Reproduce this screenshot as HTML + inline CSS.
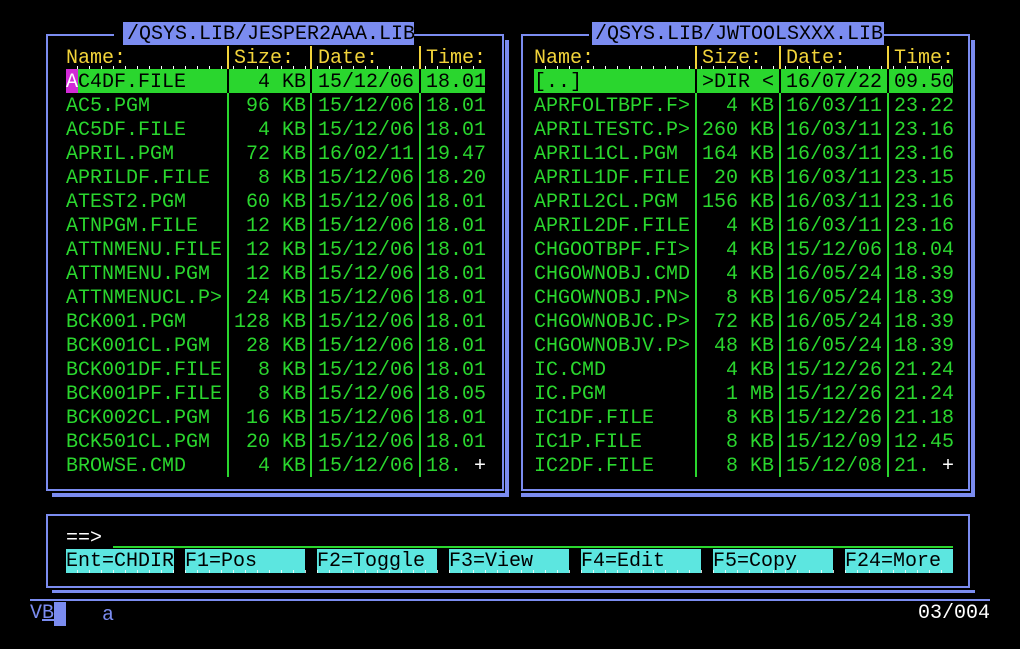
<!DOCTYPE html>
<html><head><style>
body{margin:0;background:#000;width:1020px;height:649px;overflow:hidden;position:relative;font-family:"Liberation Mono",monospace;font-size:20px;}
.t{position:absolute;line-height:24px;white-space:pre;color:#2ad62e;margin-top:2px;}
.y{color:#f2d43a}
.b{position:absolute;background:#7b8cf0}
.g{position:absolute;background:#2ad62e}
.yl{position:absolute;background:#f2d43a}
.k{position:absolute;background:#000}
.f{position:absolute;background:#5ce6e0;color:#000;line-height:26px;height:24px;white-space:pre;overflow:hidden;}
.tick{position:absolute;height:3px;background:repeating-linear-gradient(90deg,transparent 0 11px,#fff 11px 12px);}
</style></head><body>
<!-- left panel frame -->
<div class="b" style="left:46px;top:34px;width:2px;height:457px"></div>
<div class="b" style="left:46px;top:34px;width:68px;height:2px"></div>
<div class="b" style="left:414px;top:34px;width:90px;height:2px"></div>
<div class="b" style="left:502px;top:34px;width:2px;height:457px"></div>
<div class="b" style="left:46px;top:489px;width:458px;height:2px"></div>
<div class="b" style="left:505px;top:40px;width:4px;height:457px"></div>
<div class="b" style="left:52px;top:493px;width:457px;height:4px"></div>
<div class="b" style="left:123px;top:22px;width:291px;height:23px"></div>
<div class="t" style="left:127px;top:21px;color:#000">/QSYS.LIB/JESPER2AAA.LIB</div>
<!-- right panel frame -->
<div class="b" style="left:521px;top:34px;width:2px;height:457px"></div>
<div class="b" style="left:521px;top:34px;width:68px;height:2px"></div>
<div class="b" style="left:884px;top:34px;width:86px;height:2px"></div>
<div class="b" style="left:968px;top:34px;width:2px;height:457px"></div>
<div class="b" style="left:521px;top:489px;width:449px;height:2px"></div>
<div class="b" style="left:971px;top:40px;width:4px;height:457px"></div>
<div class="b" style="left:521px;top:493px;width:454px;height:4px"></div>
<div class="b" style="left:592px;top:22px;width:292px;height:23px"></div>
<div class="t" style="left:595px;top:21px;color:#000">/QSYS.LIB/JWTOOLSXXX.LIB</div>

<!-- highlight rows -->
<div class="g" style="left:66px;top:69px;width:419px;height:24px"></div>
<div class="g" style="left:534px;top:69px;width:419px;height:24px"></div>
<div style="position:absolute;left:66px;top:69px;width:12px;height:24px;background:#d22ad6"></div>

<!-- separators left -->
<div class="yl" style="left:227px;top:46px;width:2px;height:23px"></div>
<div class="yl" style="left:310px;top:46px;width:2px;height:23px"></div>
<div class="yl" style="left:419px;top:46px;width:2px;height:23px"></div>
<div class="g" style="left:227px;top:93px;width:2px;height:384px"></div>
<div class="g" style="left:310px;top:93px;width:2px;height:384px"></div>
<div class="g" style="left:419px;top:93px;width:2px;height:384px"></div>
<div class="k" style="left:227px;top:69px;width:2px;height:24px"></div>
<div class="k" style="left:310px;top:69px;width:2px;height:24px"></div>
<div class="k" style="left:419px;top:69px;width:2px;height:24px"></div>
<div class="tick" style="left:66px;top:66px;width:419px"></div>
<!-- separators right -->
<div class="yl" style="left:695px;top:46px;width:2px;height:23px"></div>
<div class="yl" style="left:779px;top:46px;width:2px;height:23px"></div>
<div class="yl" style="left:887px;top:46px;width:2px;height:23px"></div>
<div class="g" style="left:695px;top:93px;width:2px;height:384px"></div>
<div class="g" style="left:779px;top:93px;width:2px;height:384px"></div>
<div class="g" style="left:887px;top:93px;width:2px;height:384px"></div>
<div class="k" style="left:695px;top:69px;width:2px;height:24px"></div>
<div class="k" style="left:779px;top:69px;width:2px;height:24px"></div>
<div class="k" style="left:887px;top:69px;width:2px;height:24px"></div>
<div class="tick" style="left:534px;top:66px;width:419px"></div>

<!-- left text -->
<div class="t y" style="left:66px;top:45px">Name:</div>
<div class="t y" style="left:234px;top:45px">Size:</div>
<div class="t y" style="left:318px;top:45px">Date:</div>
<div class="t y" style="left:426px;top:45px">Time:</div>
<div class="t" style="left:66px;top:69px"><span style="color:#fff">A</span><span style="color:#000">C4DF.FILE</span>
AC5.PGM
AC5DF.FILE
APRIL.PGM
APRILDF.FILE
ATEST2.PGM
ATNPGM.FILE
ATTNMENU.FILE
ATTNMENU.PGM
ATTNMENUCL.P&gt;
BCK001.PGM
BCK001CL.PGM
BCK001DF.FILE
BCK001PF.FILE
BCK002CL.PGM
BCK501CL.PGM
BROWSE.CMD</div>
<div class="t" style="left:234px;top:69px;width:72px;text-align:right"><span style="color:#000">4 KB</span>
96 KB
4 KB
72 KB
8 KB
60 KB
12 KB
12 KB
12 KB
24 KB
128 KB
28 KB
8 KB
8 KB
16 KB
20 KB
4 KB</div>
<div class="t" style="left:318px;top:69px"><span style="color:#000">15/12/06</span>
15/12/06
15/12/06
16/02/11
15/12/06
15/12/06
15/12/06
15/12/06
15/12/06
15/12/06
15/12/06
15/12/06
15/12/06
15/12/06
15/12/06
15/12/06
15/12/06</div>
<div class="t" style="left:426px;top:69px"><span style="color:#000">18.01</span>
18.01
18.01
19.47
18.20
18.01
18.01
18.01
18.01
18.01
18.01
18.01
18.01
18.05
18.01
18.01
18. <span style="color:#fff">+</span></div>

<!-- right text -->
<div class="t y" style="left:534px;top:45px">Name:</div>
<div class="t y" style="left:702px;top:45px">Size:</div>
<div class="t y" style="left:786px;top:45px">Date:</div>
<div class="t y" style="left:894px;top:45px">Time:</div>
<div class="t" style="left:534px;top:69px"><span style="color:#000">[..]</span>
APRFOLTBPF.F&gt;
APRILTESTC.P&gt;
APRIL1CL.PGM
APRIL1DF.FILE
APRIL2CL.PGM
APRIL2DF.FILE
CHGOOTBPF.FI&gt;
CHGOWNOBJ.CMD
CHGOWNOBJ.PN&gt;
CHGOWNOBJC.P&gt;
CHGOWNOBJV.P&gt;
IC.CMD
IC.PGM
IC1DF.FILE
IC1P.FILE
IC2DF.FILE</div>
<div class="t" style="left:702px;top:69px;width:72px;text-align:right"><span style="color:#000">&gt;DIR &lt;</span>
4 KB
260 KB
164 KB
20 KB
156 KB
4 KB
4 KB
4 KB
8 KB
72 KB
48 KB
4 KB
1 MB
8 KB
8 KB
8 KB</div>
<div class="t" style="left:786px;top:69px"><span style="color:#000">16/07/22</span>
16/03/11
16/03/11
16/03/11
16/03/11
16/03/11
16/03/11
15/12/06
16/05/24
16/05/24
16/05/24
16/05/24
15/12/26
15/12/26
15/12/26
15/12/09
15/12/08</div>
<div class="t" style="left:894px;top:69px"><span style="color:#000">09.50</span>
23.22
23.16
23.16
23.15
23.16
23.16
18.04
18.39
18.39
18.39
18.39
21.24
21.24
21.18
12.45
21. <span style="color:#fff">+</span></div>

<!-- command box -->
<div class="b" style="left:46px;top:514px;width:924px;height:2px"></div>
<div class="b" style="left:46px;top:514px;width:2px;height:74px"></div>
<div class="b" style="left:968px;top:514px;width:2px;height:74px"></div>
<div class="b" style="left:46px;top:586px;width:924px;height:2px"></div>
<div class="b" style="left:52px;top:590px;width:923px;height:3px"></div>
<div class="t" style="left:66px;top:525px;color:#fff">==&gt;</div>
<div class="g" style="left:113px;top:546px;width:840px;height:2px"></div>
<div class="f" style="left:66px;top:549px;width:108px">Ent=CHDIR</div>
<div class="f" style="left:185px;top:549px;width:120px">F1=Pos</div>
<div class="f" style="left:317px;top:549px;width:120px">F2=Toggle</div>
<div class="f" style="left:449px;top:549px;width:120px">F3=View</div>
<div class="f" style="left:581px;top:549px;width:120px">F4=Edit</div>
<div class="f" style="left:713px;top:549px;width:120px">F5=Copy</div>
<div class="f" style="left:845px;top:549px;width:108px">F24=More</div>
<div class="tick" style="left:66px;top:570px;width:887px;opacity:.8"></div>

<!-- status -->
<div class="b" style="left:30px;top:599px;width:960px;height:2px"></div>
<div class="t" style="left:30px;top:600px;color:#7b8cf0">V<span style="text-decoration:underline">B</span></div>
<div class="b" style="left:54px;top:602px;width:12px;height:24px"></div>
<div class="t" style="left:102px;top:602px;color:#7b8cf0">a</div>
<div class="t" style="left:918px;top:600px;color:#fff">03/004</div>
</body></html>
